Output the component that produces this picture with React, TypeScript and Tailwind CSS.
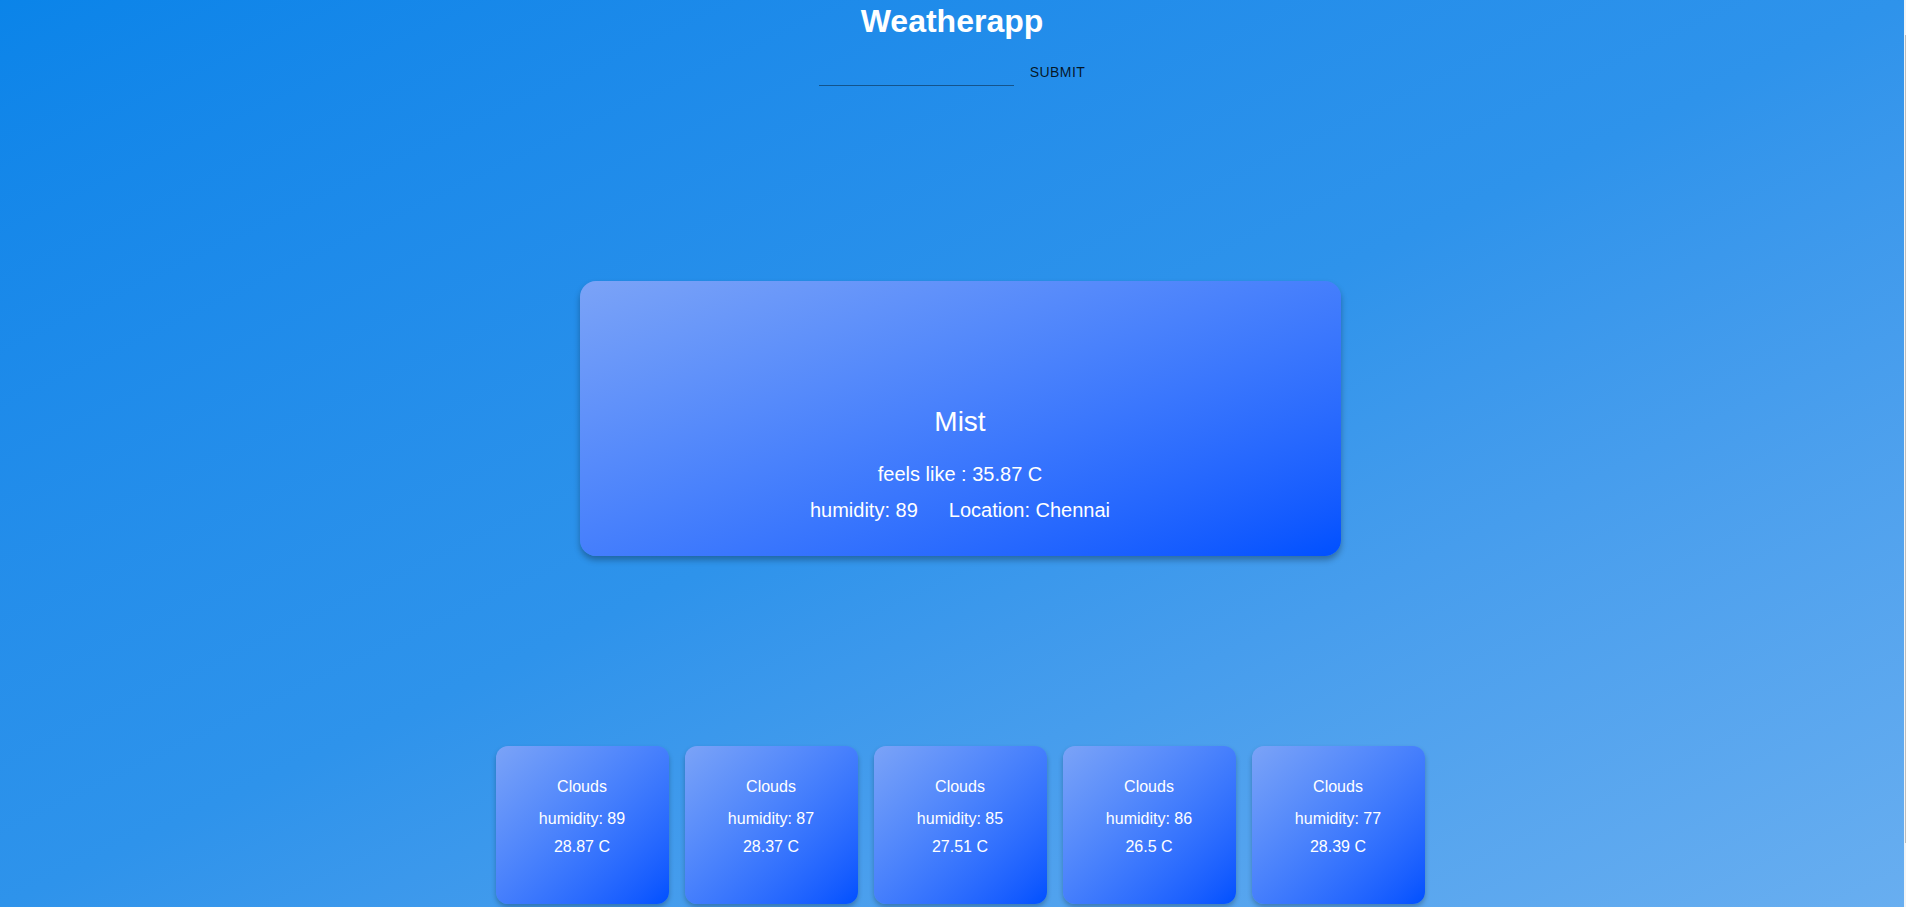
import React, { useState } from "react";

interface Forecast {
  main: string;
  humidity: number;
  temp: string;
}

const forecast: Forecast[] = [
  { main: "Clouds", humidity: 89, temp: "28.87" },
  { main: "Clouds", humidity: 87, temp: "28.37" },
  { main: "Clouds", humidity: 85, temp: "27.51" },
  { main: "Clouds", humidity: 86, temp: "26.5" },
  { main: "Clouds", humidity: 77, temp: "28.39" },
];

function ForecastCard({ item }: { item: Forecast }) {
  return (
    <div className="w-[173px] h-[158px] rounded-[12px] bg-linear-to-br from-[#7ba3f7] to-[#0050ff] shadow-[0_3px_5px_rgba(0,0,0,0.25)] text-white text-[16px] leading-[18px] flex flex-col items-center pt-[32px]">
      <p>{item.main}</p>
      <p className="mt-[14px]">humidity: {item.humidity}</p>
      <p className="mt-[10px]">{item.temp} C</p>
    </div>
  );
}

export default function App() {
  const [city, setCity] = useState<string>("");

  return (
    <div
      className="flex h-[907px] w-full overflow-hidden"
      style={{ fontFamily: '"Liberation Sans", Arial, sans-serif' }}
    >
      <div className="flex-1 bg-linear-to-br from-[#0a84e9] via-[#2e93eb] to-[#68aef0] flex flex-col">
        {/* header */}
        <div className="flex flex-col items-center pt-[3px]">
          <h1 className="text-[32px] font-bold text-white leading-[37px]">
            Weatherapp
          </h1>
          <form
            className="flex items-start mt-[14px] pl-[8px]"
            onSubmit={(e) => e.preventDefault()}
          >
            <input
              className="w-[195px] h-[32px] bg-transparent border-b border-black/40 outline-none text-white"
              value={city}
              onChange={(e) => setCity(e.target.value)}
            />
            <button
              type="submit"
              className="ml-[8px] px-[8px] py-[6px] text-[14px] leading-[24px] tracking-[0.4px] text-black/85 uppercase"
            >
              Submit
            </button>
          </form>
        </div>

        {/* current weather */}
        <div className="pl-[16px] flex justify-center mt-[191px]">
          <div className="w-[761px] h-[275px] rounded-[16px] bg-linear-to-br from-[#7ba3f7] to-[#0050ff] shadow-[0_4px_6px_rgba(0,0,0,0.3)] text-white flex flex-col items-center pt-[125px]">
            <p className="text-[28px] leading-[32px]">Mist</p>
            <p className="text-[20px] leading-[23px] mt-[25px]">
              feels like : 35.87 C
            </p>
            <div className="text-[20px] leading-[23px] mt-[13px] flex gap-[31px]">
              <span>humidity: 89</span>
              <span>Location: Chennai</span>
            </div>
          </div>
        </div>

        {/* forecast */}
        <div className="pl-[16px] flex justify-center gap-[16px] mt-[190px]">
          {forecast.map((f, i) => (
            <ForecastCard key={i} item={f} />
          ))}
        </div>
      </div>
      <div className="w-[2px] bg-[#f4f4f4] flex justify-end pt-[35px]">
        <div className="w-[1px] h-[808px] bg-[#bdbdbd]" />
      </div>
    </div>
  );
}
